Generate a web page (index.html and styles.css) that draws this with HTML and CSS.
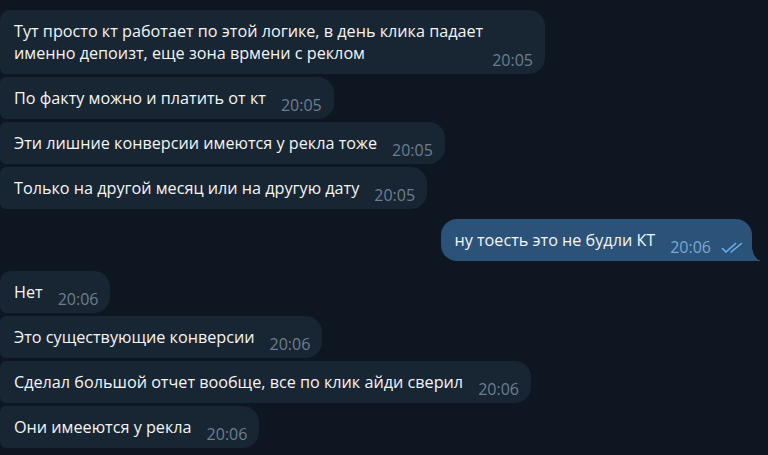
FILE: index.html
```html
<!DOCTYPE html>
<html lang="ru">
<head>
    <meta charset="UTF-8">
    <meta name="viewport" content="width=device-width, initial-scale=1.0">
    <title>Чат</title>
    <link rel="stylesheet" href="styles.css">
</head>
<body>
    <div class="chat">
        <div class="group">
            <div class="bubble in first wide">
                <div class="text">Тут просто кт работает по этой логике, в день клика падает<br>именно депоизт, еще зона врмени с реклом</div>
                <span class="time">20:05</span>
            </div>
            <div class="bubble in">
                <div class="text">По факту можно и платить от кт</div>
                <span class="time">20:05</span>
            </div>
            <div class="bubble in">
                <div class="text">Эти лишние конверсии имеются у рекла тоже</div>
                <span class="time">20:05</span>
            </div>
            <div class="bubble in last">
                <div class="text">Только на другой месяц или на другую дату</div>
                <span class="time">20:05</span>
            </div>
        </div>

        <div class="group">
            <div class="bubble out">
                <div class="text">ну тоесть это не будли КТ</div>
                <span class="time">20:06</span>
                <svg class="checks" width="24" height="12" viewBox="0 0 24 12">
                    <path d="M1.5 6.5 L5 10 L14.5 1.5" />
                    <path d="M10 10 L20.5 1.5" />
                </svg>
            </div>
        </div>

        <div class="group">
            <div class="bubble in first">
                <div class="text">Нет</div>
                <span class="time">20:06</span>
            </div>
            <div class="bubble in">
                <div class="text">Это существующие конверсии</div>
                <span class="time">20:06</span>
            </div>
            <div class="bubble in">
                <div class="text">Сделал большой отчет вообще, все по клик айди сверил</div>
                <span class="time">20:06</span>
            </div>
            <div class="bubble in">
                <div class="text">Они имееются у рекла</div>
                <span class="time">20:06</span>
            </div>
        </div>
    </div>
</body>
</html>
```

FILE: styles.css
```css
body {
    margin: 0;
    background: #0e1621;
    font-family: 'Open Sans', 'Noto Sans', sans-serif;
    color: #f5f5f5;
    overflow: hidden;
}
.chat {
    display: flex;
    flex-direction: column;
    gap: 10px;
    padding-top: 10px;
}
.group {
    display: flex;
    flex-direction: column;
    gap: 3px;
}
.bubble {
    position: relative;
    display: flex;
    align-items: flex-end;
    align-self: flex-start;
    padding: 10px 12px 10px 14px;
    background: #182533;
    border-radius: 6px 16px 16px 6px;
}
.bubble.first {
    border-top-left-radius: 10px;
}
/* wrapped message, stretched to the max bubble width */
.bubble.wide {
    width: 545px;
    box-sizing: border-box;
}
.bubble.wide .time {
    margin-left: auto;
}
.text {
    font-size: 16.2px;
    line-height: 22px;
    white-space: nowrap;
}
.time {
    margin-left: 15px;
    margin-bottom: -4px;
    font-size: 16px;
    line-height: 16px;
    color: #6d7f8f;
}
.bubble.out {
    align-self: flex-end;
    margin-right: 16px;
    padding-left: 13px;
    padding-right: 7px;
    background: #2b5278;
    border-radius: 16px 16px 0 16px;
}
.bubble.out::after {
    content: "";
    position: absolute;
    right: -10px;
    bottom: 0;
    width: 10px;
    height: 15px;
    background: radial-gradient(ellipse 10px 15px at 100% 0, transparent 97%, #2b5278 100%);
}
.bubble.out .time {
    color: #7da8d3;
}
.checks {
    margin-left: 10px;
    margin-bottom: -3px;
    fill: none;
    stroke: #6ab2f2;
    stroke-width: 1.6;
    stroke-linecap: round;
    stroke-linejoin: round;
}
```
